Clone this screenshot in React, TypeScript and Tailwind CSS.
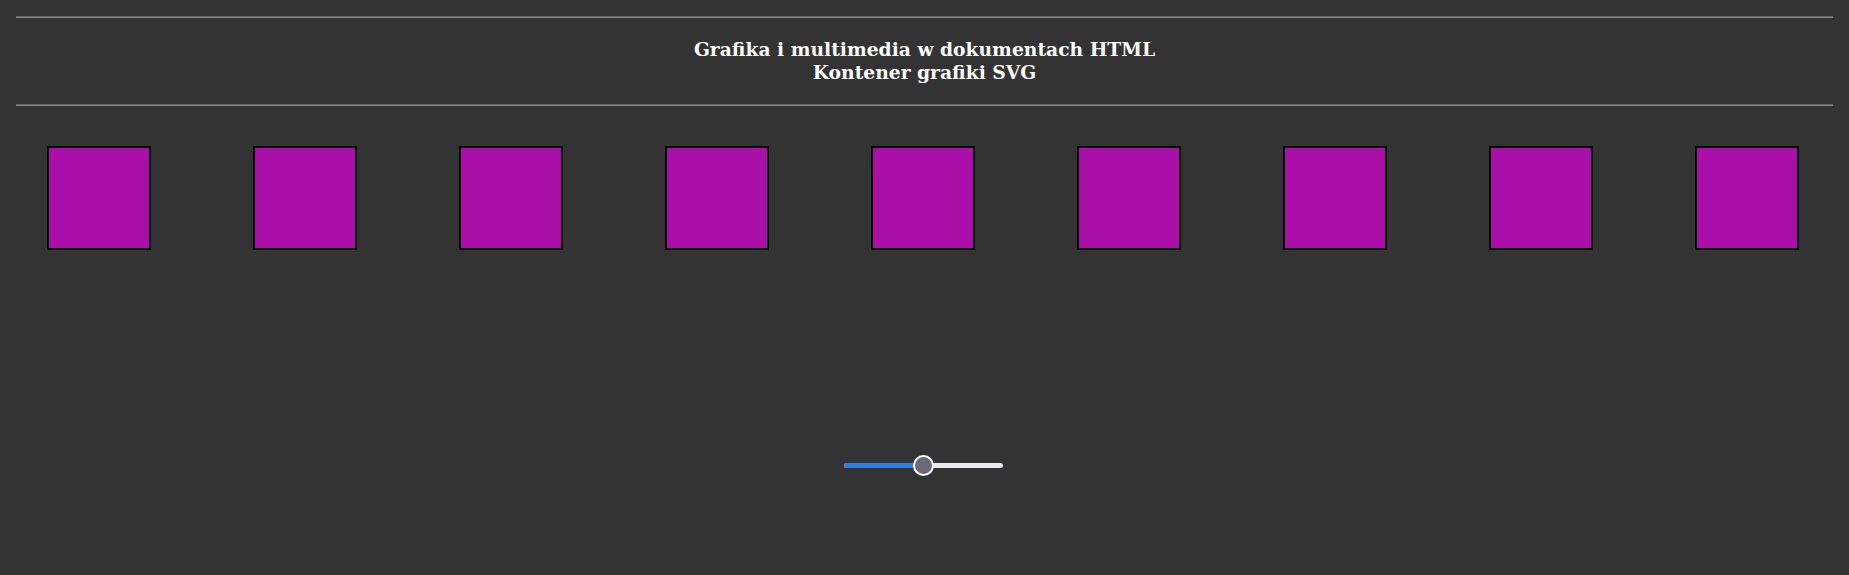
export default function App() {
  const squares = Array.from({ length: 9 });
  return (
    <div className="h-[575px] bg-[#333333] px-4 pt-4 overflow-hidden">
      <hr className="border-0 border-t border-t-[#666666] border-b border-b-[#8a8a8a]" />
      <div
        className="pt-[20px] pb-[20px] text-center text-[18.72px] leading-[23px] font-bold text-white"
        style={{ fontFamily: '"DejaVu Serif", serif' }}
      >
        <div>Grafika i multimedia w dokumentach HTML</div>
        <div>Kontener grafiki SVG</div>
      </div>
      <hr className="border-0 border-t border-t-[#666666] border-b border-b-[#8a8a8a]" />
      <div className="flex gap-[102px] pl-[31px] pt-[40px]">
        {squares.map((_, i) => (
          <svg key={i} width="104" height="104" className="shrink-0">
            <rect x="1" y="1" width="102" height="102" fill="#aa0faa" stroke="#000" strokeWidth="2" />
          </svg>
        ))}
      </div>
      <div className="flex justify-center pt-[205px]">
        <div className="relative h-[21px] w-[159px] flex items-center mr-[3px]">
          <div className="h-[5px] w-full rounded-full bg-[#e9e8ee] flex">
            <div className="h-full w-[79px] rounded-l-full bg-[#2f7fe1]" />
          </div>
          <div className="absolute left-[69px] top-0 h-[21px] w-[21px] rounded-full border-2 border-white bg-[#6a6a78]" />
        </div>
      </div>
    </div>
  );
}
